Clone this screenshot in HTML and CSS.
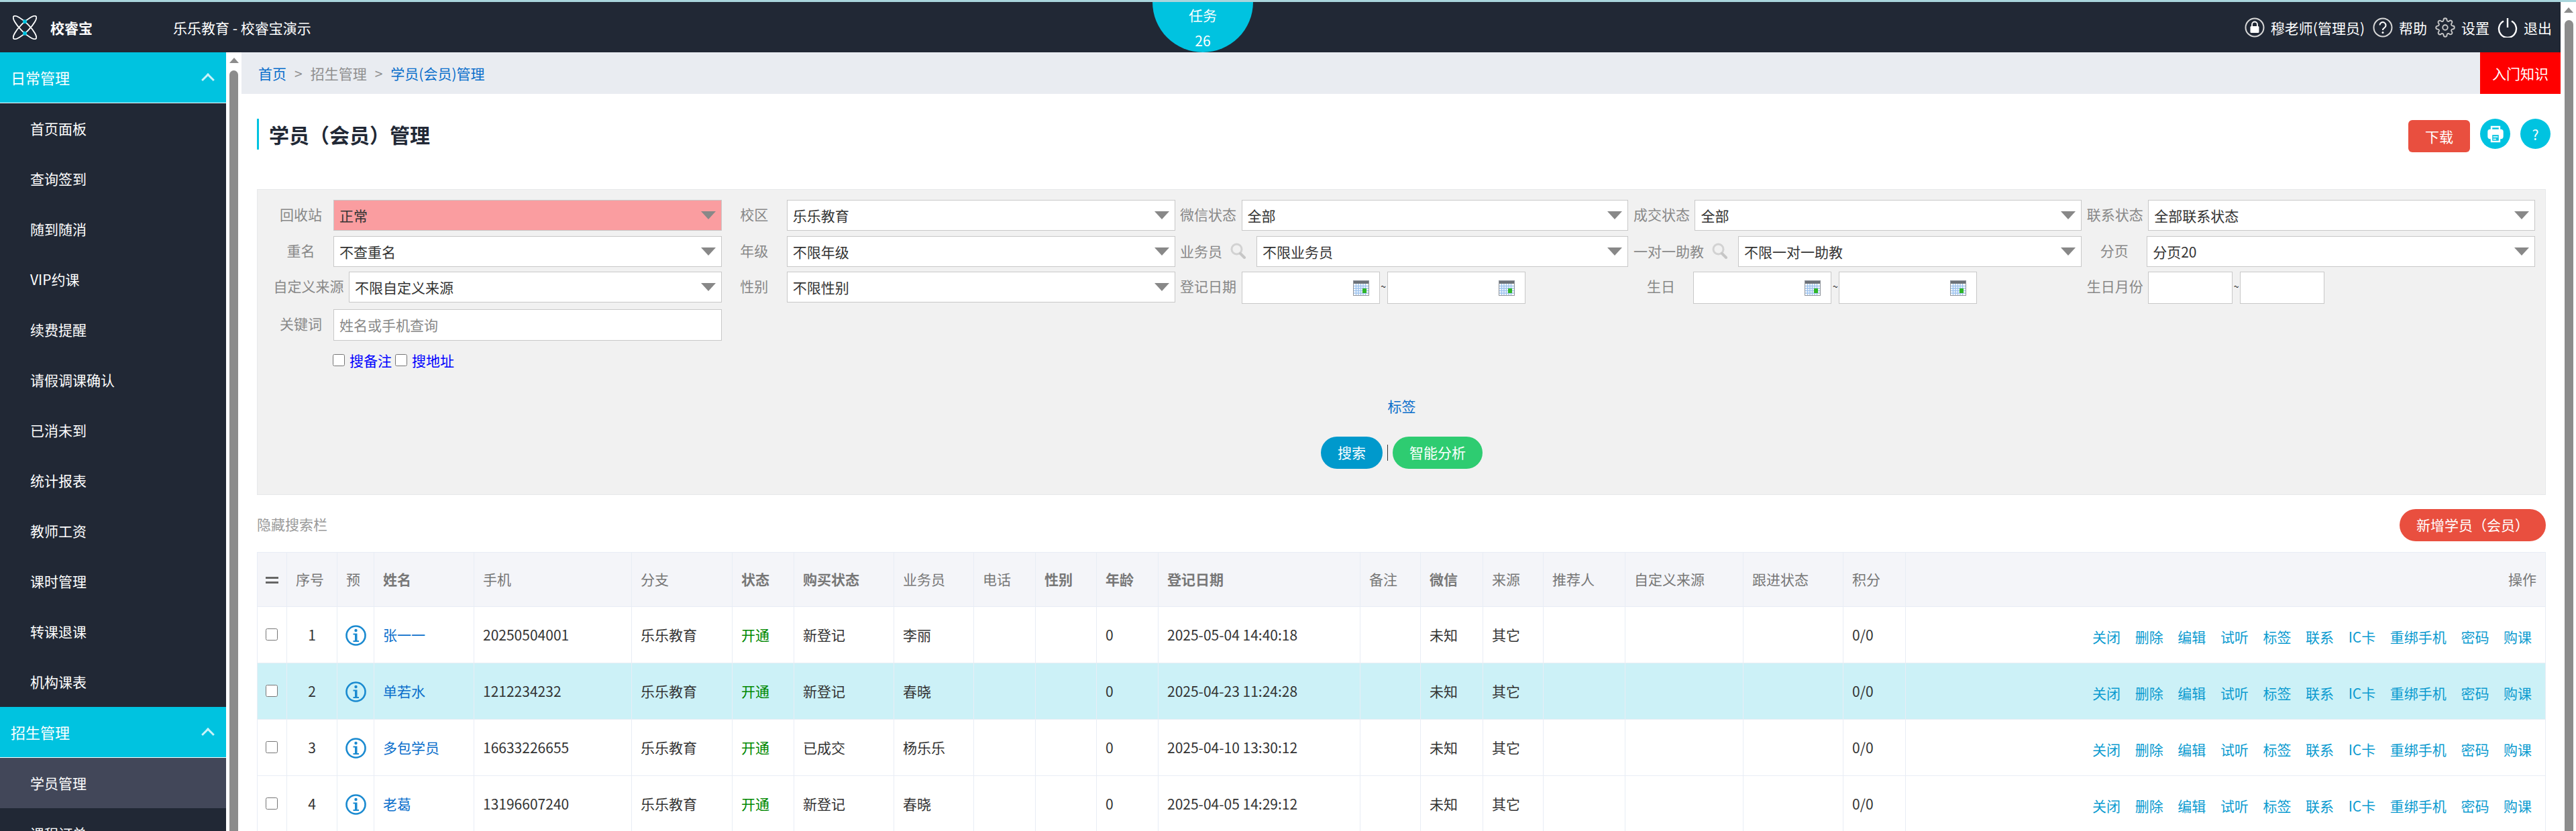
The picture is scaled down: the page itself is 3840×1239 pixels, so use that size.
FILE: index.html
```html
<!DOCTYPE html>
<html lang="zh-CN">
<head>
    <meta charset="UTF-8">
    <title>学员（会员）管理</title>
    <link rel="stylesheet" href="styles.css">
</head>
<body>

    <svg class="sprite" width="0" height="0">
        <symbol id="i-info" viewBox="0 0 31 31">
            <circle cx="15.5" cy="15.5" r="14" fill="none" stroke="#1a8ad0" stroke-width="2.6"/>
            <circle cx="15.5" cy="8" r="2.2" fill="#1a8ad0"/>
            <path d="M11.5 12.5h6v10.5h2.5v2h-8.5v-2h2.5v-8.5h-2.5z" fill="#1a8ad0"/>
        </symbol>
        <symbol id="i-cal" viewBox="0 0 24 23">
            <rect width="24" height="23" fill="#8f949b"/>
            <rect x="1" y="1" width="22" height="4" fill="#6d7278"/>
            <rect x="1" y="5" width="22" height="17" fill="#fff"/>
            <path d="M1 8.5h22M1 12h22M1 15.5h22M1 19h22M4.5 5v17M8 5v17M11.5 5v17M15 5v17M18.5 5v17" stroke="#9cc2ee" stroke-width="1.4"/>
            <rect x="14" y="12" width="6" height="7" fill="#2fb52a"/>
        </symbol>
        <symbol id="i-search" viewBox="0 0 24 24">
            <circle cx="9.5" cy="9.5" r="7.5" fill="none" stroke="#d2d2d2" stroke-width="3"/>
            <path d="M15 16l6 6" stroke="#c6c6c6" stroke-width="4" stroke-linecap="round"/>
        </symbol>
    </svg>

    <div class="top-strip"></div>

    <div class="app">
        <div class="page">
            <header class="topbar">
                <div class="brand">
                    <svg class="logo" viewBox="0 0 36 36">
                        <ellipse cx="18" cy="18" rx="6.5" ry="23.5" transform="rotate(-45 18 18)" fill="none" stroke="#fff" stroke-width="1.8"/>
                        <ellipse cx="18" cy="18" rx="6.5" ry="23.5" transform="rotate(45 18 18)" fill="none" stroke="#fff" stroke-width="1.8"/>
                        <circle cx="18" cy="9.2" r="3" fill="#00c3e0"/>
                        <circle cx="18" cy="26.8" r="3" fill="#00c3e0"/>
                    </svg>
                    <strong>校睿宝</strong>
                </div>
                <div class="org">乐乐教育 - 校睿宝演示</div>
                <div class="task-badge">
                    <span>任务</span>
                    <span>26</span>
                </div>
                <nav class="user-nav">
                    <a href="#">
                        <svg class="nav-icon" viewBox="0 0 30 30">
                            <circle cx="15" cy="15" r="13.5" fill="none" stroke="#d8d8d8" stroke-width="2"/>
                            <path d="M11 13v-2.5a4 4 0 0 1 8 0V13" fill="none" stroke="#fff" stroke-width="1.8"/>
                            <rect x="8.5" y="13" width="13" height="10" rx="1.5" fill="#fff"/>
                        </svg>
                        穆老师(管理员)
                    </a>
                    <a href="#">
                        <svg class="nav-icon" viewBox="0 0 30 30">
                            <circle cx="15" cy="15" r="13.5" fill="none" stroke="#d8d8d8" stroke-width="2"/>
                            <path d="M10.5 11.5a4.5 4.5 0 1 1 7 3.8c-1.6 1-2.5 1.8-2.5 3.7" fill="none" stroke="#fff" stroke-width="2"/>
                            <circle cx="15" cy="22.5" r="1.5" fill="#fff"/>
                        </svg>
                        帮助
                    </a>
                    <a href="#">
                        <svg class="nav-icon" viewBox="0 0 24 24" fill="none" stroke="#c8c8c8" stroke-width="1.5">
                            <circle cx="12" cy="12" r="3"/>
                            <path d="M19.4 15a1.65 1.65 0 0 0 .33 1.82l.06.06a2 2 0 0 1 0 2.83 2 2 0 0 1-2.83 0l-.06-.06a1.65 1.65 0 0 0-1.82-.33 1.65 1.65 0 0 0-1 1.51V21a2 2 0 0 1-2 2 2 2 0 0 1-2-2v-.09A1.65 1.65 0 0 0 9 19.4a1.65 1.65 0 0 0-1.82.33l-.06.06a2 2 0 0 1-2.83 0 2 2 0 0 1 0-2.83l.06-.06a1.65 1.65 0 0 0 .33-1.82 1.65 1.65 0 0 0-1.51-1H3a2 2 0 0 1-2-2 2 2 0 0 1 2-2h.09A1.65 1.65 0 0 0 4.6 9a1.65 1.65 0 0 0-.33-1.82l-.06-.06a2 2 0 0 1 0-2.83 2 2 0 0 1 2.83 0l.06.06a1.65 1.65 0 0 0 1.82.33H9a1.65 1.65 0 0 0 1-1.51V3a2 2 0 0 1 2-2 2 2 0 0 1 2 2v.09a1.65 1.65 0 0 0 1 1.51 1.65 1.65 0 0 0 1.82-.33l.06-.06a2 2 0 0 1 2.83 0 2 2 0 0 1 0 2.83l-.06.06a1.65 1.65 0 0 0-.33 1.82V9a1.65 1.65 0 0 0 1.51 1H21a2 2 0 0 1 2 2 2 2 0 0 1-2 2h-.09a1.65 1.65 0 0 0-1.51 1z"/>
                        </svg>
                        设置
                    </a>
                    <a href="#">
                        <svg class="nav-icon" viewBox="0 0 30 30" fill="none" stroke="#fff" stroke-width="2.4">
                            <path d="M9 5.5a13 13 0 1 0 12 0"/>
                            <path d="M15 1v14"/>
                        </svg>
                        退出
                    </a>
                </nav>
            </header>

            <div class="layout">
                <aside class="sidebar">
                    <div class="menu-head">日常管理<span class="chevron"></span></div>
                    <a class="menu-item" href="#">首页面板</a>
                    <a class="menu-item" href="#">查询签到</a>
                    <a class="menu-item" href="#">随到随消</a>
                    <a class="menu-item" href="#">VIP约课</a>
                    <a class="menu-item" href="#">续费提醒</a>
                    <a class="menu-item" href="#">请假调课确认</a>
                    <a class="menu-item" href="#">已消未到</a>
                    <a class="menu-item" href="#">统计报表</a>
                    <a class="menu-item" href="#">教师工资</a>
                    <a class="menu-item" href="#">课时管理</a>
                    <a class="menu-item" href="#">转课退课</a>
                    <a class="menu-item" href="#">机构课表</a>
                    <div class="menu-head">招生管理<span class="chevron"></span></div>
                    <a class="menu-item active" href="#">学员管理</a>
                    <a class="menu-item" href="#">课程订单</a>
                </aside>
                <div class="scroll-track side-track">
                    <span class="scroll-arrow"></span>
                    <span class="scroll-thumb"></span>
                </div>

                <main class="main">
                    <div class="crumbs">
                        <a href="#">首页</a>
                        <span class="sep">&gt;</span>
                        <span class="crumb-muted">招生管理</span>
                        <span class="sep">&gt;</span>
                        <a href="#">学员(会员)管理</a>
                        <a class="intro-link" href="#">入门知识</a>
                    </div>

                    <div class="content">
                        <div class="title-row">
                            <h1>学员（会员）管理</h1>
                            <div class="title-actions">
                                <a class="btn-download" href="#">下载</a>
                                <a class="btn-round" href="#">
                                    <svg width="24" height="26" viewBox="0 0 24 26" fill="none" stroke="#fff" stroke-width="2.4">
                                        <path d="M6 7V2h12v5"/>
                                        <rect x="1.5" y="7" width="21" height="12" rx="2.5" fill="#fff"/>
                                        <rect x="6" y="13" width="12" height="11" fill="#00c3e0"/>
                                        <path d="M8.5 17h7M8.5 20.5h4.5" stroke-width="1.6"/>
                                    </svg>
                                </a>
                                <a class="btn-round" href="#">?</a>
                            </div>
                        </div>

                        <section class="filter-panel">
                            <div class="filter-grid">
                                <div class="field">
                                    <label>回收站</label>
                                    <div class="sel"><select class="sel-alert"><option>正常</option></select></div>
                                </div>
                                <div class="field">
                                    <label>校区</label>
                                    <div class="sel"><select><option>乐乐教育</option></select></div>
                                </div>
                                <div class="field">
                                    <label>微信状态</label>
                                    <div class="sel"><select><option>全部</option></select></div>
                                </div>
                                <div class="field">
                                    <label>成交状态</label>
                                    <div class="sel"><select><option>全部</option></select></div>
                                </div>
                                <div class="field">
                                    <label>联系状态</label>
                                    <div class="sel"><select><option>全部联系状态</option></select></div>
                                </div>

                                <div class="field">
                                    <label>重名</label>
                                    <div class="sel"><select><option>不查重名</option></select></div>
                                </div>
                                <div class="field">
                                    <label>年级</label>
                                    <div class="sel"><select><option>不限年级</option></select></div>
                                </div>
                                <div class="field">
                                    <label class="label-search">业务员<svg width="24" height="24"><use href="#i-search"/></svg></label>
                                    <div class="sel"><select><option>不限业务员</option></select></div>
                                </div>
                                <div class="field">
                                    <label class="label-search">一对一助教<svg width="24" height="24"><use href="#i-search"/></svg></label>
                                    <div class="sel"><select><option>不限一对一助教</option></select></div>
                                </div>
                                <div class="field">
                                    <label>分页</label>
                                    <div class="sel"><select><option>分页20</option></select></div>
                                </div>

                                <div class="field">
                                    <label>自定义来源</label>
                                    <div class="sel"><select><option>不限自定义来源</option></select></div>
                                </div>
                                <div class="field">
                                    <label>性别</label>
                                    <div class="sel"><select><option>不限性别</option></select></div>
                                </div>
                                <div class="field">
                                    <label>登记日期</label>
                                    <div class="range">
                                        <div class="date"><input type="text"><svg width="24" height="23"><use href="#i-cal"/></svg></div>
                                        <span class="tilde">~</span>
                                        <div class="date"><input type="text"><svg width="24" height="23"><use href="#i-cal"/></svg></div>
                                    </div>
                                </div>
                                <div class="field">
                                    <label>生日</label>
                                    <div class="range">
                                        <div class="date"><input type="text"><svg width="24" height="23"><use href="#i-cal"/></svg></div>
                                        <span class="tilde">~</span>
                                        <div class="date"><input type="text"><svg width="24" height="23"><use href="#i-cal"/></svg></div>
                                    </div>
                                </div>
                                <div class="field">
                                    <label>生日月份</label>
                                    <div class="range">
                                        <div class="date date-small"><input type="text"></div>
                                        <span class="tilde">~</span>
                                        <div class="date date-small"><input type="text"></div>
                                    </div>
                                </div>

                                <div class="field">
                                    <label>关键词</label>
                                    <input class="keyword" type="text" placeholder="姓名或手机查询">
                                </div>
                            </div>

                            <div class="check-row">
                                <input type="checkbox" id="searchNote"><label for="searchNote">搜备注</label>
                                <input type="checkbox" id="searchAddr"><label for="searchAddr">搜地址</label>
                            </div>

                            <div class="tag-row"><a href="#">标签</a></div>

                            <div class="search-row">
                                <a class="btn-search" href="#">搜索</a>
                                <span class="divider"></span>
                                <a class="btn-analyse" href="#">智能分析</a>
                            </div>
                        </section>

                        <div class="list-bar">
                            <a class="hide-search" href="#">隐藏搜索栏</a>
                            <a class="btn-add" href="#">新增学员（会员）</a>
                        </div>

                        <table class="student-table">
                            <colgroup>
                                <col class="w44"><col class="w75"><col class="w55"><col class="w149"><col class="w235">
                                <col class="w150"><col class="w92"><col class="w149"><col class="w119"><col class="w92">
                                <col class="w91"><col class="w92"><col class="w301"><col class="w90"><col class="w93">
                                <col class="w90"><col class="w122"><col class="w176"><col class="w149"><col class="w93">
                                <col>
                            </colgroup>
                            <thead>
                                <tr>
                                    <th class="cell-check"><span class="bars"></span></th>
                                    <th>序号</th>
                                    <th>预</th>
                                    <th class="bold">姓名</th>
                                    <th>手机</th>
                                    <th>分支</th>
                                    <th class="bold">状态</th>
                                    <th class="bold">购买状态</th>
                                    <th>业务员</th>
                                    <th>电话</th>
                                    <th class="bold">性别</th>
                                    <th class="bold">年龄</th>
                                    <th class="bold">登记日期</th>
                                    <th>备注</th>
                                    <th class="bold">微信</th>
                                    <th>来源</th>
                                    <th>推荐人</th>
                                    <th>自定义来源</th>
                                    <th>跟进状态</th>
                                    <th>积分</th>
                                    <th class="th-ops">操作</th>
                                </tr>
                            </thead>
                            <tbody>
                                <tr>
                                    <td class="cell-check"><input type="checkbox"></td>
                                    <td class="cell-num">1</td>
                                    <td class="cell-info"><svg width="31" height="31"><use href="#i-info"/></svg></td>
                                    <td><a class="name" href="#">张一一</a></td>
                                    <td>20250504001</td>
                                    <td>乐乐教育</td>
                                    <td class="open">开通</td>
                                    <td>新登记</td>
                                    <td>李丽</td>
                                    <td></td>
                                    <td></td>
                                    <td>0</td>
                                    <td>2025-05-04 14:40:18</td>
                                    <td></td>
                                    <td>未知</td>
                                    <td>其它</td>
                                    <td></td>
                                    <td></td>
                                    <td></td>
                                    <td>0/0</td>
                                    <td class="ops"><a href="#">关闭</a><a href="#">删除</a><a href="#">编辑</a><a href="#">试听</a><a href="#">标签</a><a href="#">联系</a><a href="#">IC卡</a><a href="#">重绑手机</a><a href="#">密码</a><a href="#">购课</a></td>
                                </tr>
                                <tr class="row-hover">
                                    <td class="cell-check"><input type="checkbox"></td>
                                    <td class="cell-num">2</td>
                                    <td class="cell-info"><svg width="31" height="31"><use href="#i-info"/></svg></td>
                                    <td><a class="name" href="#">单若水</a></td>
                                    <td>1212234232</td>
                                    <td>乐乐教育</td>
                                    <td class="open">开通</td>
                                    <td>新登记</td>
                                    <td>春晓</td>
                                    <td></td>
                                    <td></td>
                                    <td>0</td>
                                    <td>2025-04-23 11:24:28</td>
                                    <td></td>
                                    <td>未知</td>
                                    <td>其它</td>
                                    <td></td>
                                    <td></td>
                                    <td></td>
                                    <td>0/0</td>
                                    <td class="ops"><a href="#">关闭</a><a href="#">删除</a><a href="#">编辑</a><a href="#">试听</a><a href="#">标签</a><a href="#">联系</a><a href="#">IC卡</a><a href="#">重绑手机</a><a href="#">密码</a><a href="#">购课</a></td>
                                </tr>
                                <tr>
                                    <td class="cell-check"><input type="checkbox"></td>
                                    <td class="cell-num">3</td>
                                    <td class="cell-info"><svg width="31" height="31"><use href="#i-info"/></svg></td>
                                    <td><a class="name" href="#">多包学员</a></td>
                                    <td>16633226655</td>
                                    <td>乐乐教育</td>
                                    <td class="open">开通</td>
                                    <td>已成交</td>
                                    <td>杨乐乐</td>
                                    <td></td>
                                    <td></td>
                                    <td>0</td>
                                    <td>2025-04-10 13:30:12</td>
                                    <td></td>
                                    <td>未知</td>
                                    <td>其它</td>
                                    <td></td>
                                    <td></td>
                                    <td></td>
                                    <td>0/0</td>
                                    <td class="ops"><a href="#">关闭</a><a href="#">删除</a><a href="#">编辑</a><a href="#">试听</a><a href="#">标签</a><a href="#">联系</a><a href="#">IC卡</a><a href="#">重绑手机</a><a href="#">密码</a><a href="#">购课</a></td>
                                </tr>
                                <tr>
                                    <td class="cell-check"><input type="checkbox"></td>
                                    <td class="cell-num">4</td>
                                    <td class="cell-info"><svg width="31" height="31"><use href="#i-info"/></svg></td>
                                    <td><a class="name" href="#">老葛</a></td>
                                    <td>13196607240</td>
                                    <td>乐乐教育</td>
                                    <td class="open">开通</td>
                                    <td>新登记</td>
                                    <td>春晓</td>
                                    <td></td>
                                    <td></td>
                                    <td>0</td>
                                    <td>2025-04-05 14:29:12</td>
                                    <td></td>
                                    <td>未知</td>
                                    <td>其它</td>
                                    <td></td>
                                    <td></td>
                                    <td></td>
                                    <td>0/0</td>
                                    <td class="ops"><a href="#">关闭</a><a href="#">删除</a><a href="#">编辑</a><a href="#">试听</a><a href="#">标签</a><a href="#">联系</a><a href="#">IC卡</a><a href="#">重绑手机</a><a href="#">密码</a><a href="#">购课</a></td>
                                </tr>
                            </tbody>
                        </table>
                    </div>
                </main>
            </div>
        </div>

        <div class="scroll-track page-track">
            <span class="scroll-arrow"></span>
            <span class="scroll-thumb"></span>
        </div>
    </div>

</body>
</html>
```

FILE: styles.css
```css
* {
    box-sizing: border-box;
}

html, body {
    height: 100%;
}

body {
    margin: 0;
    overflow: hidden;
    background-color: #fff;
    color: #333;
    font-family: "Noto Sans CJK SC", "Noto Sans", sans-serif;
    font-size: 21px;
    line-height: 30px;
}

a {
    color: #0a6ecb;
    text-decoration: none;
}

.sprite {
    position: absolute;
}

.top-strip {
    height: 3px;
    background-color: #a9d5dc;
}

.app {
    display: flex;
    height: calc(100% - 3px);
}

.page {
    flex: 1;
    min-width: 0;
    display: flex;
    flex-direction: column;
}

/* top bar */
.topbar {
    position: relative;
    flex: none;
    height: 75px;
    display: flex;
    align-items: center;
    padding: 0 13px 0 19px;
    background-color: #212835;
    color: #fff;
}

.brand {
    width: 239px;
    display: flex;
    align-items: center;
    font-size: 21px;
}

.logo {
    width: 36px;
    height: 36px;
    margin-right: 20px;
}

.task-badge {
    position: absolute;
    top: 0;
    left: 1718px;
    width: 150px;
    height: 75px;
    padding-top: 4px;
    display: flex;
    flex-direction: column;
    align-items: center;
    gap: 8px;
    background-color: #00c3e0;
    border-radius: 0 0 75px 75px;
}

.user-nav {
    margin-left: auto;
    display: flex;
    gap: 12px;
}

.user-nav a {
    display: flex;
    align-items: center;
    gap: 9px;
    color: #fff;
}

.nav-icon {
    width: 30px;
    height: 30px;
}

/* sidebar */
.layout {
    flex: 1;
    min-height: 0;
    display: flex;
}

.sidebar {
    flex: none;
    width: 337px;
    background-color: #212835;
    overflow: hidden;
}

.menu-head {
    height: 76px;
    padding: 0 17px 1px 16px;
    display: flex;
    align-items: center;
    justify-content: space-between;
    background-color: #00c3e0;
    border-bottom: 1px solid #fff;
    color: #fff;
    font-size: 22px;
}

.chevron {
    width: 14px;
    height: 14px;
    margin: 8px 3px 0 0;
    border-top: 3px solid #c9f3f9;
    border-left: 3px solid #c9f3f9;
    transform: rotate(45deg);
}

.menu-item {
    display: block;
    height: 75px;
    padding-left: 45px;
    color: #fff;
    line-height: 74px;
}

.menu-item.active {
    background-color: #424759;
}

/* fake scrollbars */
.scroll-track {
    flex: none;
    width: 23px;
    display: flex;
    flex-direction: column;
    align-items: center;
    background-color: #fff;
}

.scroll-arrow {
    flex: none;
    width: 0;
    height: 0;
    border-left: 7.5px solid transparent;
    border-right: 7.5px solid transparent;
    border-bottom: 8px solid #8c8c8c;
}

.scroll-thumb {
    flex: 1;
    width: 13px;
    background-color: #8c8c8c;
    border-radius: 7px 7px 0 0;
}

.side-track {
    padding-top: 8px;
}

.side-track .scroll-thumb {
    margin-top: 11px;
}

.page-track {
    padding: 8px 0 0 1px;
}

.page-track .scroll-thumb {
    margin-top: 11px;
}

/* breadcrumb */
.main {
    flex: 1;
    min-width: 0;
    overflow: hidden;
}

.crumbs {
    height: 62px;
    padding-left: 25px;
    display: flex;
    align-items: center;
    gap: 12px;
    background-color: #e9ecf1;
    line-height: 62px;
}

.crumb-muted, .sep {
    color: #8f8f8f;
}

.intro-link {
    margin-left: auto;
    width: 120px;
    height: 62px;
    background-color: #f00;
    color: #fff;
    text-align: center;
}

/* title */
.content {
    padding: 0 22px 0 23px;
}

.title-row {
    margin: 37px 0 55px;
    height: 50px;
    display: flex;
    align-items: flex-start;
    justify-content: space-between;
}

h1 {
    margin: 0;
    height: 46px;
    padding-left: 15px;
    border-left: 3px solid #00c3e0;
    color: #212835;
    font-size: 30px;
    font-weight: 700;
    line-height: 46px;
}

.title-actions {
    display: flex;
    gap: 15px;
    margin-right: -7px;
}

.btn-download {
    width: 92px;
    height: 48px;
    margin-top: 2px;
    background-color: #e94f3f;
    border-radius: 6px;
    color: #fff;
    text-align: center;
    line-height: 48px;
}

.btn-round {
    width: 45px;
    height: 45px;
    display: flex;
    align-items: center;
    justify-content: center;
    background-color: #00c3e0;
    border-radius: 50%;
    color: #fff;
}

/* filter */
.filter-panel {
    height: 456px;
    padding: 15px 15px 0 16px;
    background-color: #f1f1f1;
    border: 1px solid #e7e8ea;
}

.filter-grid {
    display: grid;
    grid-template-columns: repeat(5, 1fr);
    row-gap: 7.5px;
    align-items: start;
}

.field {
    display: flex;
    min-width: 0;
}

.field > label {
    flex: none;
    min-width: 97px;
    padding: 0 7.5px;
    color: #888;
    line-height: 42px;
    text-align: center;
}

.field > label.label-search {
    display: flex;
    align-items: center;
    gap: 12px;
    height: 44px;
    padding-right: 15px;
}

.sel {
    position: relative;
    flex: 1;
    min-width: 0;
    height: 46px;
}

.sel::after {
    content: "";
    position: absolute;
    top: 17px;
    right: 9px;
    border-left: 11.5px solid transparent;
    border-right: 11.5px solid transparent;
    border-top: 12px solid #888;
    pointer-events: none;
}

select, .keyword, .date input {
    display: block;
    width: 100%;
    margin: 0;
    border: 1px solid #c8c8c8;
    border-radius: 0;
    outline: none;
    background-color: #fff;
    color: #333;
    font-family: inherit;
    font-size: 21px;
}

select {
    height: 46px;
    padding: 0 40px 0 8px;
    appearance: none;
}

.sel-alert {
    background-color: #fa9da0;
}

.keyword {
    flex: 1;
    min-width: 0;
    width: auto;
    height: 47px;
    padding: 0 8px;
}

.keyword::placeholder {
    color: #888;
    opacity: 1;
}

.range {
    display: flex;
    align-items: flex-start;
}

.tilde {
    width: 11px;
    color: #222;
    font-size: 14px;
    line-height: 44px;
    text-align: center;
}

.date {
    position: relative;
    width: 206px;
    height: 48px;
}

.date input {
    height: 100%;
}

.date svg {
    position: absolute;
    top: 13px;
    right: 16px;
}

.date-small {
    width: 126px;
}

.check-row {
    margin: 14px 0 0 96px;
    height: 30px;
    display: flex;
    align-items: center;
}

.check-row input {
    width: 18px;
    height: 18px;
    margin: 0 7px 0 0;
}

.check-row label {
    margin-right: 5px;
    color: #00f;
}

.tag-row {
    margin-top: 38px;
    text-align: center;
}

.search-row {
    margin-top: 31px;
    display: flex;
    justify-content: center;
    align-items: center;
}

.btn-search, .btn-analyse {
    height: 48px;
    padding: 0 25px;
    border-radius: 24px;
    color: #fff;
    line-height: 47px;
}

.btn-search {
    background-color: #0099cc;
}

.btn-analyse {
    background-color: #2ecc71;
}

.divider {
    width: 1px;
    height: 24px;
    margin: 0 7px;
    background-color: #333;
}

/* list */
.list-bar {
    margin: 21px 0 16px;
    height: 48px;
    display: flex;
    align-items: center;
    justify-content: space-between;
}

.hide-search {
    padding-bottom: 4px;
    color: #999;
}

.btn-add {
    width: 218px;
    height: 48px;
    background-color: #e94f3f;
    border-radius: 24px;
    color: #fff;
    text-align: center;
    line-height: 46px;
}

.student-table {
    width: 3412px;
    table-layout: fixed;
    border-collapse: collapse;
}

.w44 { width: 44px; }
.w55 { width: 55px; }
.w75 { width: 75px; }
.w90 { width: 90px; }
.w91 { width: 91px; }
.w92 { width: 92px; }
.w93 { width: 93px; }
.w119 { width: 119px; }
.w122 { width: 122px; }
.w149 { width: 149px; }
.w150 { width: 150px; }
.w176 { width: 176px; }
.w235 { width: 235px; }
.w301 { width: 301px; }

.student-table th, .student-table td {
    padding: 0 0 2px 13px;
    border: 1px solid #e8edf5;
    white-space: nowrap;
    text-align: left;
}

.student-table th {
    height: 81px;
    background-color: #f4f5f9;
    color: #777;
    font-weight: 400;
}

.student-table th.bold {
    font-weight: 700;
}

.student-table td {
    height: 84px;
    color: #333;
}

.student-table .th-ops {
    padding-right: 13px;
    text-align: right;
}

.student-table .cell-check {
    padding: 0 0 2px 12px;
}

.cell-check input {
    display: block;
    width: 18px;
    height: 18px;
    margin: 0;
}

.bars {
    display: block;
    width: 19px;
    height: 10px;
    margin-top: 3px;
    border-top: 3px solid #666;
    border-bottom: 3px solid #666;
}

.student-table .cell-num {
    padding: 0 0 2px;
    text-align: center;
}

.student-table .cell-info {
    padding: 7px 0 0;
    text-align: center;
}

.cell-info svg {
    display: inline-block;
}

.student-table .open {
    color: #080;
}

.name {
    color: #0a6ecb;
}

.row-hover td {
    background-color: #ccf1f7;
}

.student-table .ops {
    padding: 4px 20px 0 0;
    text-align: right;
}

.ops a {
    margin-left: 21.6px;
    color: #0b9bd0;
}
```
